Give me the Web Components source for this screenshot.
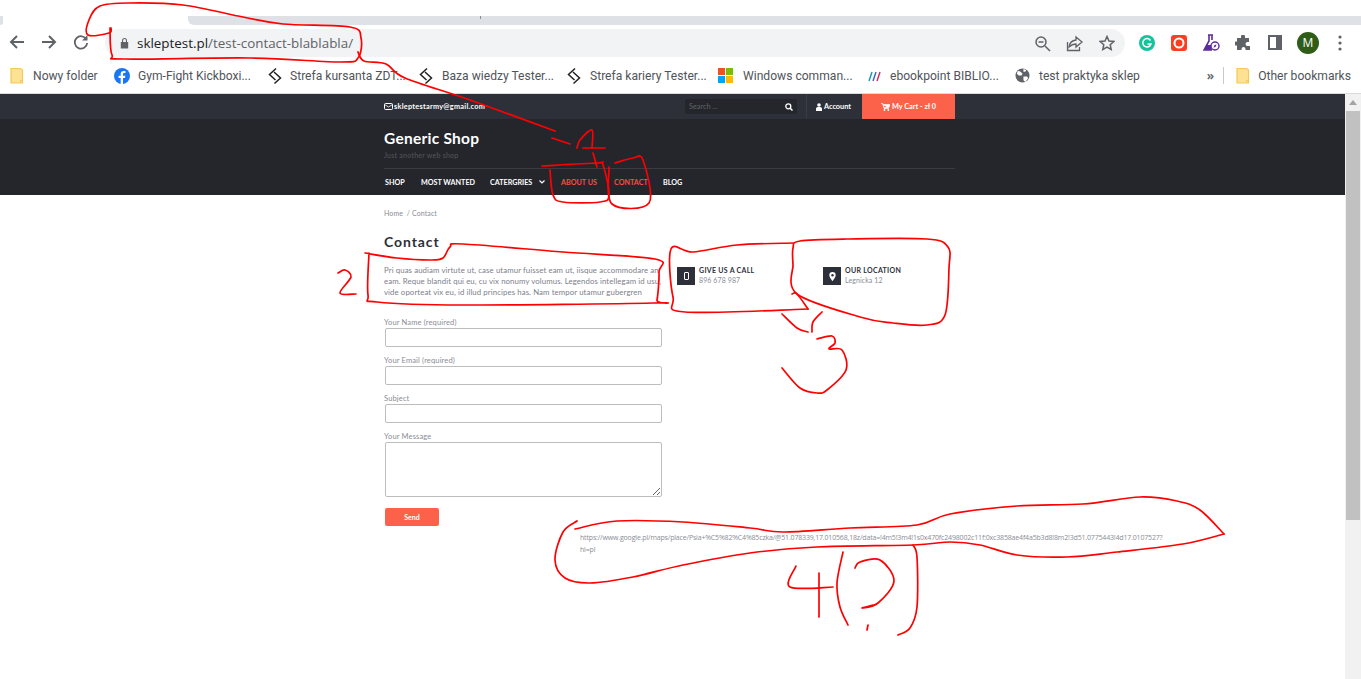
<!DOCTYPE html>
<html lang="pl"><head><meta charset="utf-8"><title>Contact</title>
<style>
html,body{margin:0;height:679px;overflow:hidden;background:#fff}
body{position:relative;font-family:"Lato","Liberation Sans",sans-serif}
</style></head><body>
<browser-toolbar></browser-toolbar>
<bookmark-bar>
<bookmark-item w="104" ic="23" label="Nowy folder" icon="folder"></bookmark-item>
<bookmark-item w="153" ic="24" label="Gym-Fight Kickboxi..." icon="fb"></bookmark-item>
<bookmark-item w="151" ic="23" label="Strefa kursanta ZDT..." icon="s"></bookmark-item>
<bookmark-item w="148" ic="24" label="Baza wiedzy Tester..." icon="s"></bookmark-item>
<bookmark-item w="152" ic="24" label="Strefa kariery Tester..." icon="s"></bookmark-item>
<bookmark-item w="150" ic="25" label="Windows comman..." icon="win"></bookmark-item>
<bookmark-item w="147" ic="22" label="ebookpoint BIBLIO..." icon="ebook"></bookmark-item>
<bookmark-item w="165" ic="24" label="test praktyka sklep" icon="globe"></bookmark-item>
</bookmark-bar>
<page-view>
<shop-topbar></shop-topbar>
<shop-header></shop-header>
<contact-section></contact-section>
</page-view>
<ink-annotations></ink-annotations>
<script>
function def(name,css,html){
  customElements.define(name,class extends HTMLElement{
    connectedCallback(){
      if(this.shadowRoot)return;
      const r=this.attachShadow({mode:'open'});
      r.innerHTML='<style>'+css+'</style>'+(typeof html==='function'?html(this):html);
    }
  });
}
const I={
 folder:'<svg width="14" height="18" viewBox="0 0 14 18"><path d="M1 1.500h9.500l2 1.500v13H1z" fill="#fde293" stroke="#f4c95a" stroke-width="1.200"/><path d="M10.500 16v-2.500h2" fill="none" stroke="#f4c95a"/></svg>',
 fb:'<svg width="16" height="16" viewBox="0 0 16 16"><circle cx="8" cy="8" r="8" fill="#1877f2"/><path d="M9 16V10h2l.4-2.3H9V6.300c0-.7.3-1.200 1.300-1.200h1.200V3.100c-.5-.1-1.100-.2-1.800-.2-1.900 0-3 1.100-3 3.100v1.700H4.600V10h2.100v6z" fill="#fff"/></svg>',
 s:'<svg width="16" height="18" viewBox="0 0 16 18"><path d="M9 1.500L2.500 7.500 8.500 13M7 5l6.500 6-6 5.500" fill="none" stroke="#222" stroke-width="1.500"/></svg>',
 win:'<svg width="15" height="15" viewBox="0 0 15 15"><rect width="7" height="7" fill="#f25022"/><rect x="8" width="7" height="7" fill="#7fba00"/><rect y="8" width="7" height="7" fill="#00a4ef"/><rect x="8" y="8" width="7" height="7" fill="#ffb900"/></svg>',
 ebook:'<svg width="14" height="12" viewBox="0 0 14 12"><path d="M1 11L4 2" stroke="#1c9bb0" stroke-width="1.500"/><path d="M5 11L8 2" stroke="#3b6bc4" stroke-width="1.500"/><path d="M9 11l3-9" stroke="#d2335c" stroke-width="1.500"/></svg>',
 globe:'<svg width="15" height="15" viewBox="0 0 16 16"><circle cx="8" cy="8" r="7.500" fill="#5f6368"/><path d="M3 3l3 1 2 2-1 2-3 0-2-2zM9 9l4 0 1 2-3 4-2-2zM9 1l3 1-1 2-2 0z" fill="#fff"/></svg>'
};
def('browser-toolbar',`
:host{display:block;height:58px;background:#fff;position:relative;color:#5f6368}
.tabs{height:9px;padding-top:16px;display:flex}
.tabs s{display:block;width:3px;background:#dee1e6;border-bottom-right-radius:3px}
.tabs i{display:block;width:185px;background:#fff}.tabs b{display:block;flex:1;background:#dee1e6;border-bottom-left-radius:6px;position:relative}
.tabs u{position:absolute;left:292px;top:0;height:3px;width:1px;background:#8a8d91}
.row{height:33px;display:flex;align-items:center;box-sizing:border-box;padding-left:5px}
.nav{width:24px;height:24px;margin-right:8px;display:flex;align-items:center;justify-content:center;flex:none}
.omni{width:1020px;flex:none;height:28px;background:#f1f3f4;border-radius:14px;display:flex;align-items:center;padding-left:15px;box-sizing:border-box;margin-left:4px;margin-top:3px}
.url{font:13.400px "Open Sans","Liberation Sans",sans-serif;margin-left:8px;color:#5f6368;white-space:nowrap}.url b{font-weight:400;color:#202124}
.spc{flex:1}
.oi{display:flex;gap:15px;padding-right:10px;align-items:center}
.ext{display:flex;align-items:center;margin-left:14px;margin-top:2px}
.ext>*{flex:none}
.av{width:22px;height:22px;border-radius:50%;background:#2f5d17;color:#fff;font:12px "Open Sans",sans-serif;display:flex;align-items:center;justify-content:center;margin-left:2px}
`,`<div class="tabs"><s></s><i></i><b><u></u></b></div>
<div class="row">
<span class="nav"><svg width="16" height="16" viewBox="0 0 16 16"><path d="M15 8H2M8 2L2 8l6 6" fill="none" stroke="#5f6368" stroke-width="2"/></svg></span>
<span class="nav"><svg width="16" height="16" viewBox="0 0 16 16"><path d="M1 8h13M8 2l6 6-6 6" fill="none" stroke="#5f6368" stroke-width="2"/></svg></span>
<span class="nav"><svg width="16" height="16" viewBox="0 0 16 16"><path d="M13.500 5.500A6.200 6.200 0 1 0 14.200 9" fill="none" stroke="#5f6368" stroke-width="1.800"/><path d="M14.500 1v5.500H9z" fill="#5f6368"/></svg></span>
<div class="omni">
<svg width="9" height="12" viewBox="0 0 9 12"><path d="M2 5V3.400a2.500 2.500 0 0 1 5 0V5h1.200v6.500H.8V5zM3.100 5h2.800V3.400a1.400 1.400 0 0 0-2.800 0z" fill="#5f6368"/></svg>
<span class="url"><b>skleptest.pl</b>/test-contact-blablabla/</span>
<span class="spc"></span>
<span class="oi">
<svg width="17" height="17" viewBox="0 0 17 17"><circle cx="7" cy="7" r="5" fill="none" stroke="#5f6368" stroke-width="1.500"/><path d="M11 11l5 5M4.500 7h5" stroke="#5f6368" stroke-width="1.500"/></svg>
<svg width="18" height="17" viewBox="0 0 18 17"><path d="M10 2l6 5-6 5V9C7 9 5 10 3 12c.5-4 3-6.500 7-7z" fill="none" stroke="#5f6368" stroke-width="1.300"/><path d="M1.500 7v8.500h12V12" fill="none" stroke="#5f6368" stroke-width="1.300"/></svg>
<svg width="16" height="16" viewBox="0 0 16 16"><path d="M8 1.500l2 4.500 4.800.5-3.600 3.200 1 4.800L8 12.100l-4.200 2.400 1-4.800L1.200 6.500 6 6z" fill="none" stroke="#5f6368" stroke-width="1.500"/></svg>
</span></div>
<div class="ext">
<svg width="16" height="16" viewBox="0 0 16 16" style="margin-right:16px"><circle cx="8" cy="8" r="8" fill="#15c39a"/><path d="M11.500 5.500A4.200 4.200 0 1 0 12 9H8.500" fill="none" stroke="#fff" stroke-width="1.500"/></svg>
<svg width="16" height="16" viewBox="0 0 16 16" style="margin-right:16px"><rect width="16" height="16" rx="3" fill="#fa3e1f"/><circle cx="8" cy="8" r="4.500" fill="none" stroke="#fff" stroke-width="2"/></svg>
<svg width="17" height="18" viewBox="0 0 17 18" style="margin-right:15px"><path d="M5 1h5M6 1.500v5.500L1 16h8M9 1.500V6" fill="none" stroke="#5b2d9e" stroke-width="1.600"/><path d="M3.500 11h5v5H1z" fill="#5b2d9e"/><circle cx="12" cy="12" r="4" fill="#fff" stroke="#5b2d9e" stroke-width="1.400"/><path d="M13.500 10.500l-1 2.500-2 .5 1-2.500z" fill="#5b2d9e"/></svg>
<svg width="16" height="16" viewBox="0 0 16 16" style="margin-right:17px"><path d="M6 1.500a2 2 0 0 1 4 0V3h4v4h-1.500a2 2 0 0 0 0 4H15v4H10.500v-1a2 2 0 0 0-4 0v1H2v-4.500H1a2 2 0 0 1 0-4h1V3h4z" fill="#5f6368"/></svg>
<svg width="14" height="15" viewBox="0 0 14 15" style="margin-right:13px"><path d="M1 1h12v13H1z" fill="none" stroke="#5f6368" stroke-width="2"/><rect x="8" y="1" width="5" height="13" fill="#5f6368"/></svg>
<span class="av">M</span>
<svg width="4" height="16" viewBox="0 0 4 16" style="margin-left:19px"><circle cx="2" cy="2" r="1.600" fill="#5f6368"/><circle cx="2" cy="8" r="1.600" fill="#5f6368"/><circle cx="2" cy="14" r="1.600" fill="#5f6368"/></svg>
</div></div>`);
def('bookmark-bar',`
:host{display:flex;height:36px;background:#fff;border-bottom:1px solid #d9dadc;box-sizing:border-box;align-items:center;padding:0 0 0 10px;position:relative}
.r{margin-left:auto;display:flex;align-items:center;font:12.100px Roboto,"Liberation Sans",sans-serif;color:#50545a;padding-right:10px}
.sep{width:1px;height:17px;background:#c8c9cb;margin:0 12px 0 9px}
.ch{font:bold 12px "Open Sans",sans-serif;color:#6a6e73}
svg{margin-right:8px}
`,()=>`<slot></slot><div class="r"><span class="ch">»</span><span class="sep"></span>${I.folder}<span>Other bookmarks</span></div>`);
def('bookmark-item',`
:host{display:inline-flex;align-items:center;font:12.100px Roboto,"Liberation Sans",sans-serif;color:#50545a;white-space:nowrap;height:18px;vertical-align:middle;flex:none}
.ic{display:flex;align-items:center;flex:none}
`,h=>{h.style.width=h.getAttribute('w')+'px';return `<span class="ic" style="width:${h.getAttribute('ic')}px">${I[h.getAttribute('icon')]}</span><span>${h.getAttribute('label')}</span>`});
def('page-view',`
:host{display:block;position:relative;height:585px;padding-right:16px;box-sizing:border-box;overflow:hidden}
.sb{position:absolute;right:0;top:0;bottom:0;width:16px;background:#f1f1f1}
.sb i{position:absolute;left:1px;top:17px;width:14px;height:409px;background:#c1c1c1}
.sb b{position:absolute;left:4px;top:6px;border:4px solid transparent;border-top:0;border-bottom:5px solid #a3a3a3}
`,`<slot></slot><div class="sb"><b></b><i></i></div>`);
def('shop-topbar',`
:host{display:flex;height:25px;background:#2d3038;color:#fff;padding-left:384px;font:bold 7.300px "Lato",sans-serif;align-items:stretch}
.w{width:571px;display:flex;align-items:center}
.mail{display:flex;align-items:center;gap:1px;margin-right:auto;letter-spacing:.28px}
.s{width:112px;height:15px;background:#24262c;border-radius:2px;display:flex;align-items:center;justify-content:space-between;padding:0 4px;box-sizing:border-box;color:#60636a;font-weight:400;margin-right:9px}
.acc{border-left:1px solid #3a3d45;height:25px;display:flex;align-items:center;padding:0 0 0 9px;gap:2px;box-sizing:border-box;width:56px}
.cart{width:93px;height:25px;background:#fb6249;display:flex;align-items:center;justify-content:center;gap:2px}
`,`<div class="w"><span class="mail"><svg width="9" height="7" viewBox="0 0 9 7"><rect x=".5" y=".5" width="8" height="6" rx="1" fill="none" stroke="#fff"/><path d="M.5 1.500l4 2.500 4-2.500" fill="none" stroke="#fff" stroke-width=".8"/></svg>skleptestarmy@gmail.com</span>
<span class="s"><span>Search ...</span><svg width="8" height="8" viewBox="0 0 8 8"><circle cx="3.300" cy="3.300" r="2.500" fill="none" stroke="#fff" stroke-width="1.300"/><path d="M5 5l2.500 2.500" stroke="#fff" stroke-width="1.500"/></svg></span>
<span class="acc"><svg width="6" height="8" viewBox="0 0 6 8"><circle cx="3" cy="2" r="1.800" fill="#fff"/><path d="M0 8V5.500C0 4.500 1 4 3 4s3 .5 3 1.500V8z" fill="#fff"/></svg>Account</span>
<span class="cart"><svg width="9" height="8" viewBox="0 0 9 8"><path d="M0 .5h1.800L3 5.500h5M2.200 1.500H9L8 4.500H3z" fill="#fff" stroke="#fff" stroke-width=".6"/><circle cx="3.500" cy="7" r=".9" fill="#fff"/><circle cx="7.300" cy="7" r=".9" fill="#fff"/></svg>My Cart - zł 0</span></div>`);
def('shop-header',`
:host{display:block;height:76px;background:#24262c;padding-left:384px;box-sizing:border-box;color:#fff}
.w{width:571px}
h1{margin:0;padding-top:10px;font:bold 15.500px/18px "Lato",sans-serif;letter-spacing:.25px}
p{margin:0;padding-top:3px;font:7px/10px "Lato",sans-serif;color:#55575c;height:19px;letter-spacing:.25px}
nav{border-top:1px solid #3a3c42;display:flex;height:26px;align-items:center;font:bold 7.200px "Lato",sans-serif;text-transform:uppercase;margin-top:-1px}
nav span{white-space:nowrap;display:flex;align-items:center}
.on{color:#f4513f}
`,`<div class="w"><h1>Generic Shop</h1><p>Just another web shop</p>
<nav><span style="width:37px;padding-left:1px;box-sizing:border-box">Shop</span><span style="width:69px">Most Wanted</span><span style="width:71px">Catergries<svg style="margin-left:7px" width="6" height="4" viewBox="0 0 6 4"><path d="M.5.5L3 3 5.500.5" fill="none" stroke="#fff" stroke-width="1.200"/></svg></span><span class="on" style="width:53px">About Us</span><span class="on" style="width:49px">Contact</span><span>Blog</span></nav></div>`);
def('form-field',`
:host{display:block}
label{display:block;font:7.500px/11px "Lato",sans-serif;color:#8a8d96;height:11px;letter-spacing:.15px}
input,textarea{display:block;box-sizing:border-box;width:277px;height:19px;border:1px solid #bdbdbd;border-radius:2px;background:#fff;margin:0 0 8px 1px;padding:0;outline:0}
textarea{height:55px;margin-bottom:0}
`,h=>`<label>${h.getAttribute('label')}</label>`+(h.hasAttribute('area')?'<textarea></textarea>':'<input type="text">'));
def('info-card',`
:host{display:flex;align-items:flex-start;gap:4px;font-family:"Lato",sans-serif}
.i{width:18px;height:18px;background:#2d3038;display:flex;align-items:center;justify-content:center;flex:none}
b{display:block;font:bold 7px/9px "Lato",sans-serif;color:#2d3038;text-transform:uppercase;letter-spacing:.3px}
span{display:block;font:7px/11px "Lato",sans-serif;color:#8a8d96;letter-spacing:.1px}
`,h=>`<div class="i">${h.getAttribute('icon')==='phone'?'<svg width="5" height="8" viewBox="0 0 5 8"><rect x=".5" y=".5" width="4" height="7" rx=".5" fill="none" stroke="#fff"/></svg>':'<svg width="7" height="9" viewBox="0 0 7 9"><path d="M3.500 0A3.200 3.200 0 0 1 6.700 3.200C6.700 5.300 3.500 9 3.500 9S.3 5.300.3 3.200A3.200 3.200 0 0 1 3.500 0z" fill="#fff"/><circle cx="3.500" cy="3.200" r="1.200" fill="#2d3038"/></svg>'}</div><div style="margin-top:-1px"><b>${h.getAttribute('title')}</b><span>${h.getAttribute('text')}</span></div>`);
def('contact-section',`
:host{display:block;padding-left:384px;font-family:"Lato",sans-serif}
.bc{height:12px;padding-top:12px;font:7px/12px "Lato",sans-serif;color:#8a8d96;letter-spacing:.1px}
h2{margin:0;padding-top:14px;font:bold 14px/18px "Lato",sans-serif;color:#2d3038;letter-spacing:.9px}
.g{display:grid;grid-template-columns:293px 146px 1fr;width:571px;margin-top:-5px}
.g>info-card{margin-top:21px}
p{margin:19px 0 0;font:7.800px/11px "Lato",sans-serif;color:#7d808a;width:278px;letter-spacing:.1px;height:42px;white-space:nowrap}
.f{display:block;margin-top:10px}
.btn{display:block;width:54px;height:18px;margin:11px 0 0 1px;background:#fb6249;border:0;border-radius:2px;color:#fff;font:bold 7px "Lato",sans-serif;padding:0}
.u{margin:6px 0 0 196px;width:600px;font:7px/12px "Open Sans",sans-serif;color:#8a8d96;letter-spacing:-.17px;white-space:nowrap}
`,`<div class="bc">Home &nbsp;/ Contact</div>
<h2>Contact</h2>
<div class="g"><div><p>Pri quas audiam virtute ut, case utamur fuisset eam ut, iisque accommodare an<br>eam. Reque blandit qui eu, cu vix nonumy volumus. Legendos intellegam id usu,<br>vide oporteat vix eu, id illud principes has. Nam tempor utamur gubergren</p></div>
<info-card icon="phone" title="Give us a call" text="896 678 987"></info-card>
<info-card icon="pin" title="Our location" text="Legnicka 12"></info-card></div>
<div class="f"><form-field label="Your Name (required)"></form-field><form-field label="Your Email (required)"></form-field><form-field label="Subject"></form-field><form-field area label="Your Message"></form-field></div>
<button class="btn">Send</button>
<div class="u">https://www.google.pl/maps/place/Psia+%C5%82%C4%85czka/@51.078339,17.010568,18z/data=!4m5!3m4!1s0x470fc2498002c11f:0xc3858ae4f4a5b3d8!8m2!3d51.0775443!4d17.0107527?<br>hl=pl</div>`);
const P=[
"M111 28L109 33L88 35L89 20L100 6L130 3L183 5L243 17L283 24L350 27L361 38L358 58L340 62L250 58L125 59L112 55L110 28",
"M358 52L364 61L386 64L405 78L470 100L555 131",
"M552 138L570 144",
"M577 148L580 140L592 130L592 148","M583 148L605 148","M593 153L597 167",
"M542 166L597 163L603 165L609 195L600 202L563 202L553 195L550 170",
"M615 163L633 158L643 160L649 203L612 204L609 167",
"M365 253L397 258L430 260L443 258L450 247L463 244L563 252L655 259L659 272L657 300L653 303L463 305L377 302L368 295L369 253",
"M338 273L345 270L351 277L340 293L356 294",
"M793 243L737 245L693 252L671 249L673 297L685 312L808 309","M808 309L797 294L792 294",
"M793 265L793 248L800 241L847 239L927 239L948 247L949 268L945 315L927 325L893 323L860 317L797 294L793 265",
"M782 314L797 328L808 332","M822 312L813 322L812 332","M817 339L832 336L835 343L829 349L842 350L846 370L827 390L817 393L800 388L782 368",
"M577 521L563 532L555 560L565 578L590 583L633 577L683 565L750 553L817 547L913 545L950 542L980 545L1017 555L1067 557L1117 552L1183 544L1224 534",
"M1224 534L1200 510L1177 501L1140 497L1083 504L1017 506L950 514L917 525L850 528L783 532L750 528L683 522L617 521L575 529",
"M796 566L790 587L833 587","M819 573L819 617","M843 552L837 583L840 607L848 625",
"M855 568L860 562L880 560L894 581L878 603L862 608L873 605","M868 625L867 630",
"M913 545L917 557L917 607L910 628L898 635"
];
function smooth(d){
  const p=d.slice(1).split('L').map(s=>s.split(' ').map(Number));
  let o='M'+p[0].join(' ');
  for(let i=0;i<p.length-1;i++){
    const a=p[i-1]||p[i],b=p[i],c=p[i+1],e=p[i+2]||c;
    o+=`C${b[0]+(c[0]-a[0])/6} ${b[1]+(c[1]-a[1])/6} ${c[0]-(e[0]-b[0])/6} ${c[1]-(e[1]-b[1])/6} ${c[0]} ${c[1]}`;
  }
  return o;
}
def('ink-annotations',`:host{position:absolute;left:0;top:0;width:1361px;height:679px;pointer-events:none}svg{display:block}path{fill:none;stroke:#f00;stroke-width:1.700;stroke-linejoin:round;stroke-linecap:round}`,
`<svg width="1361" height="679">${P.map(d=>`<path d="${smooth(d)}"/>`).join('')}</svg>`);
</script>
</body></html>
